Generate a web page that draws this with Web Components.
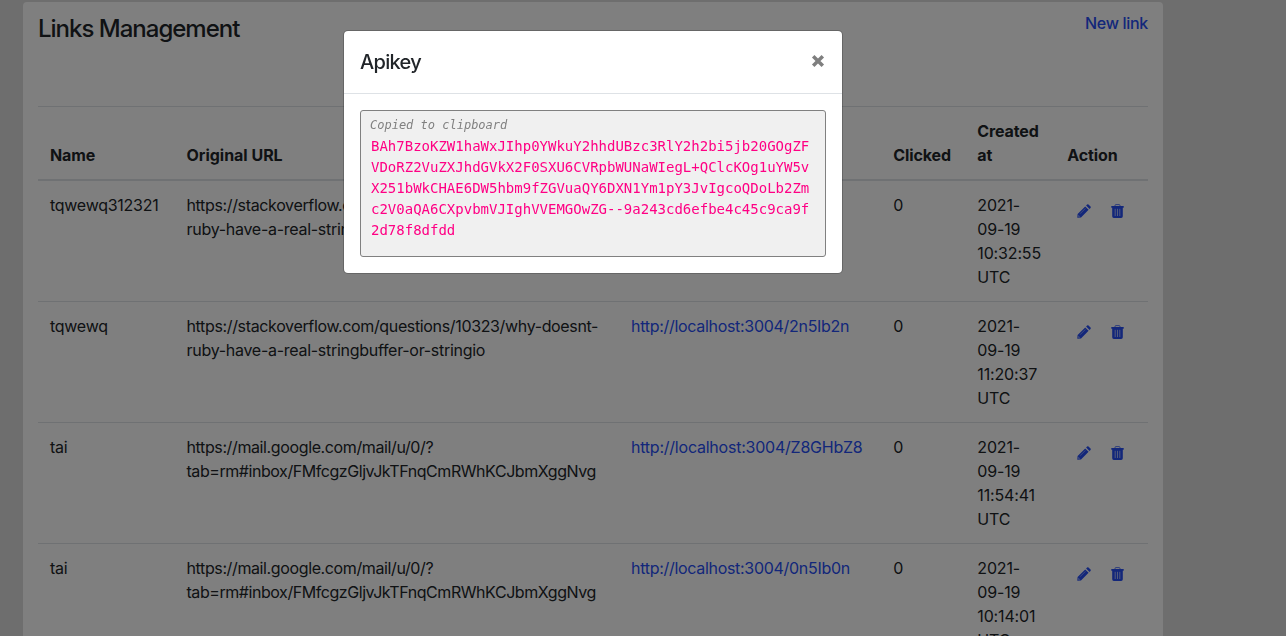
<!DOCTYPE html>
<html lang="en">
<head>
<meta charset="utf-8">
<title>Links Management</title>
<style>
html,body{margin:0;height:100%;overflow:hidden}
body{box-sizing:border-box;padding-top:2px;background:#dcdcdc;color:#212529;font:400 16px/24px Inter,"Liberation Sans",sans-serif}
</style>
</head>
<body>
<links-panel></links-panel>
<modal-dialog>
  <span slot="title">Apikey</span>
  <api-key>BAh7BzoKZW1haWxJIhp0YWkuY2hhdUBzc3RlY2h2bi5jb20GOgZFVDoRZ2VuZXJhdGVkX2F0SXU6CVRpbWUNaWIegL+QClcKOg1uYW5vX251bWkCHAE6DW5hbm9fZGVuaQY6DXN1Ym1pY3JvIgcoQDoLb2Zmc2V0aQA6CXpvbmVJIghVVEMGOwZG--9a243cd6efbe4c45c9ca9f2d78f8dfdd</api-key>
</modal-dialog>
<script>
const define = (name, html) => customElements.define(name, class extends HTMLElement {
  constructor() {
    super();
    this.attachShadow({mode: 'open'}).innerHTML = html;
  }
});

define('icon-pencil', `<style>:host{display:block;width:14px;height:14px}svg{display:block}</style>
<svg width="14" height="14" viewBox="0 0 14 14"><path fill="currentColor" d="M.3 13.7.6 10 8.2 2.4 11.6 5.8 4 13.4ZM9.1 1.5 10.1.5Q10.8-.1 11.5.5L13.5 2.5Q14.1 3.2 13.5 3.9L12.5 4.9Z"/><path d="M3.1 9.7 8.4 4.4" stroke="#fff" stroke-opacity=".6" stroke-width=".7"/><path d="M1.4 11 3 12.6 1.4 12.8Z" fill="#fff" fill-opacity=".75"/></svg>`);

define('icon-trash', `<style>:host{display:block;width:13px;height:14px}svg{display:block}</style>
<svg width="13" height="14" viewBox="0 0 13 14"><path d="M4 2.2V1.5Q4 .6 5 .6H8Q9 .6 9 1.5V2.2" fill="none" stroke="currentColor" stroke-opacity=".75" stroke-width="1"/><path fill="currentColor" d="M.3 2H12.7V3.7H.3ZM1.2 3.6H11.8V12.3Q11.8 14 10.2 14H2.8Q1.2 14 1.2 12.3Z"/><path d="M4.2 4.8V12M6.5 4.8V12M8.8 4.8V12" stroke="#fff" stroke-opacity=".75" stroke-width=".8"/></svg>`);

define('link-row', `<style>
:host{display:grid;grid-template-columns:136.5px 444.5px 262.3px 84px 90px 1fr;border-top:1px solid #dee2e6;height:120px}
:host([first]){border-top:0}
div{padding:12px 0 0 12px}
.name{letter-spacing:-.27px}
.short{color:#264ef5;letter-spacing:-.3px}
.date{letter-spacing:-.15px}
.act{display:flex;align-items:flex-start;gap:20px;padding:23px 0 0 22px;color:#264ef5}
</style>
<div class="name"><slot name="name"></slot></div><div class="url"><slot name="url"></slot></div><div class="short"><slot name="short"></slot></div><div>0</div><div class="date"><slot name="date"></slot></div><div class="act"><icon-pencil></icon-pencil><icon-trash></icon-trash></div>`);

define('links-table', `<style>
:host{display:block}
.head{display:grid;grid-template-columns:136.5px 444.5px 262.3px 84px 90px 1fr;align-items:end;border-top:1px solid #dee2e6;border-bottom:2px solid #dee2e6;padding:12px 0;font-weight:700;letter-spacing:-.13px}
.head div{padding-left:12px}
</style>
<div class="head"><div>Name</div><div style="letter-spacing:-.02px">Original URL</div><div></div><div>Clicked</div><div>Created<br>at</div><div>Action</div></div><slot></slot>`);

const so = '<span style="letter-spacing:-.35px">https://stackoverflow.com/questions/10323/why-doesnt-</span><br><span style="letter-spacing:-.28px">ruby-have-a-real-stringbuffer-or-stringio</span>';
const mail = '<span style="letter-spacing:-.38px">https://mail.google.com/mail/u/0/?</span><br><span style="letter-spacing:-.44px">tab=rm#inbox/FMfcgzGljvJkTFnqCmRWhKCJbmXggNvg</span>';
const rows = [
  ['tqwewq312321', so, '1n5Ib1n', '10:32:55', -.3],
  ['tqwewq', so, '2n5Ib2n', '11:20:37', -.3],
  ['tai', mail, 'Z8GHbZ8', '11:54:41', -.23],
  ['tai', mail, '0n5Ib0n', '10:14:01', -.3],
].map(([name, url, key, time, ls], i) => `<link-row${i ? '' : ' first'}><span slot="name">${name}</span><span slot="url">${url}</span><span slot="short" style="letter-spacing:${ls}px">http://localhost:3004/${key}</span><span slot="date">2021-<br>09-19<br>${time}<br>UTC</span></link-row>`).join('');

define('links-panel', `<style>
:host{display:block;box-sizing:border-box;width:1140px;height:100%;overflow:hidden;margin-left:23px;padding:9px 15px 0;background:#fff;border-radius:4px 4px 0 0}
header{display:flex;justify-content:space-between;align-items:flex-start;height:95px}
h2{margin:0;font-size:24px;line-height:36px;font-weight:500;letter-spacing:-1px}
a{color:#264ef5;font-weight:500;letter-spacing:-.3px}
</style>
<header><h2>Links Management</h2><a>New link</a></header>
<links-table>${rows}</links-table>`);

define('modal-dialog', `<style>
:host{position:fixed;inset:0;background:rgba(0,0,0,.5);display:flex;align-items:flex-start}
section{box-sizing:border-box;width:500px;margin:30px 0 0 343px;background:#fff;background-clip:padding-box;border:1px solid rgba(0,0,0,.2);border-radius:5px}
header{display:flex;justify-content:space-between;align-items:center;height:62px;padding:0 17px 0 16px;border-bottom:1px solid #dee2e6}
h5{margin:0;font-size:20px;line-height:30px;font-weight:500;letter-spacing:-.7px}
main{padding:16px}
svg{display:block;margin-top:-2px}
</style>
<section><header><h5><slot name="title"></slot></h5><svg width="14" height="14" viewBox="0 0 14 14"><path d="M2.2 2.2 11.8 11.8M11.8 2.2 2.2 11.8" stroke="#7f7f7f" stroke-width="3.5"/></svg></header><main><slot></slot></main></section>`);

define('api-key', `<style>
:host{display:block;box-sizing:border-box;height:147px;padding:4px 10px;background:#f0f0f0;border:1px solid #808080;border-radius:3px;font-family:"DejaVu Sans Mono",monospace}
em{display:block;margin-left:-1px;font-size:12px;line-height:20px;color:#808080}
code{display:block;margin-top:1px;font:14px/21px "DejaVu Sans Mono",monospace;color:#ff0084;word-break:break-all;width:440px}
</style>
<em>Copied to clipboard</em><code><slot></slot></code>`);
</script>
</body>
</html>
